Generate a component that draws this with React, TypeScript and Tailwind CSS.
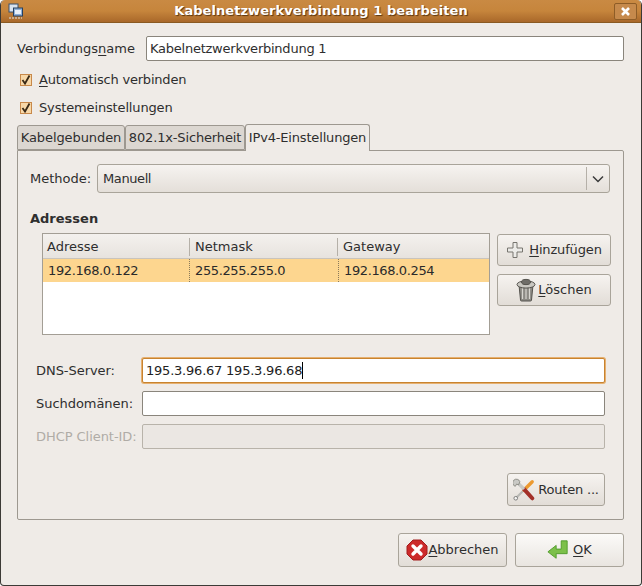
import React from "react";

const U = ({ children }: { children: React.ReactNode }) => <span className="underline underline-offset-2">{children}</span>;

function Btn({ className, icon, children }: { className: string; icon: React.ReactNode; children: React.ReactNode }) {
  return (
    <div className={`flex items-center justify-center rounded-[3px] border border-[#a9a49a] bg-gradient-to-b from-[#f6f3f0] to-[#e2ddd7] text-[#2e2e2e] ${className}`}>
      {icon}
      {children}
    </div>
  );
}

function Check({ children, mt, tracking }: { children: React.ReactNode; mt: string; tracking: string }) {
  return (
    <div className={`flex h-[20px] items-center pl-[3px] ${mt}`}>
      <div className="flex h-[12px] w-[12px] items-center justify-center border border-[#c8894a] bg-[#f8d8a8]">
        <svg width="12" height="12" viewBox="0 0 12 12" className="shrink-0"><path d="M2.5 6 L5 9.5 L9.5 1.5" fill="none" stroke="#3a2a16" strokeWidth="1.8" /></svg>
      </div>
      <span className={`ml-[7px] ${tracking}`}>{children}</span>
    </div>
  );
}

function Field({ label, mt, disabled, focus, value }: { label: string; mt: string; disabled?: boolean; focus?: boolean; value?: string }) {
  return (
    <div className={`flex items-center pl-[18px] pr-[18px] ${mt} ${disabled ? "text-[#b0aca6]" : ""}`}>
      <span className="w-[106px] shrink-0 whitespace-nowrap tracking-[-0.05px]">{label}</span>
      <div className={`flex h-[25px] flex-1 items-center rounded-[2px] border pl-[3px] ${focus ? "border-[#c8832f] shadow-[0_0_0_1px_#e6b070]" : disabled ? "border-[#b8b3aa] bg-[#ebe7e3]" : "border-[#8a857c]"} ${disabled ? "" : "bg-white"}`}>
        <span className="tracking-[-0.22px] text-[#222]">{value}</span>
        {focus && <span className="h-[17px] w-px bg-black" />}
      </div>
    </div>
  );
}

function Tab({ active, className, children }: { active?: boolean; className: string; children: React.ReactNode }) {
  return (
    <div className={`flex items-center justify-center whitespace-nowrap rounded-t-[3px] border border-[#9d9890] ${active ? "z-10 -mb-px h-[27px] border-b-0 bg-[#efebe7]" : "h-[25px] bg-[#dcd7d1]"} ${className}`}>
      {children}
    </div>
  );
}

function Plus() {
  return (
    <svg width="18" height="18" viewBox="0 0 18 18" className="mr-[2px]">
      <path d="M7 1.5h4v5.5h5.5v4H11v5.5H7V11H1.5V7H7z" fill="#ecebe8" stroke="#77756f" />
    </svg>
  );
}
function Trash() {
  return (
    <svg width="20" height="24" viewBox="0 0 20 24" className="mr-[1px]">
      <path d="M3 7h14l-1.5 15a1 1 0 0 1-1 1h-9a1 1 0 0 1-1-1z" fill="#8c8a84" stroke="#55534e" />
      <path d="M6.5 10v11M10 10v11M13.5 10v11" stroke="#d8d6d0" strokeWidth="1.2" />
      <ellipse cx="10" cy="6.5" rx="9" ry="3.6" fill="#c9c7c1" stroke="#55534e" />
      <ellipse cx="10" cy="4" rx="4.5" ry="2.6" fill="#6f6d68" stroke="#55534e" />
    </svg>
  );
}
function Tools() {
  return (
    <svg width="22" height="24" viewBox="0 0 24 24" className="mr-[3px]">
      <path d="M3 21 L12 12" stroke="#b8b8b4" strokeWidth="2.4" />
      <circle cx="3" cy="21" r="2" fill="#f4f4f2" stroke="#777" />
      <path d="M12 12 L21 3" stroke="#ec9a30" strokeWidth="3.6" strokeLinecap="round" />
      <path d="M12 11 L21 21" stroke="#a33028" strokeWidth="4.4" strokeLinecap="round" />
      <path d="M6 5 L12 11" stroke="#c8c8c4" strokeWidth="3.6" />
      <path d="M7.5 3 A4 4 0 1 0 2.5 8 L4 5.5 L6 6.5 z" fill="#c9c9c5" stroke="#77776f" strokeWidth="0.8" />
    </svg>
  );
}
function Cancel() {
  return (
    <svg width="22" height="22" viewBox="0 0 22 22" className="shrink-0">
      <path d="M7 1h8l6 6v8l-6 6H7l-6-6V7z" fill="#cc2a2a" stroke="#a21c1c" />
      <path d="M7 7l8 8M15 7l-8 8" stroke="#fff" strokeWidth="3.4" strokeLinecap="round" />
    </svg>
  );
}
function OkIcon() {
  return (
    <svg width="22" height="22" viewBox="0 0 24 22" className="mr-[4px] shrink-0">
      <path d="M15.5 1h6.5v14H10v5L1 13l9-7v4h5.5z" fill="#7cc04a" stroke="#4f9a2a" />
    </svg>
  );
}

export default function App() {
  return (
    <div className="relative flex h-[586px] w-[642px] flex-col overflow-hidden rounded-t-[5px] rounded-b-[4px] border-x border-b border-[#3c3a36] bg-[#efebe7] text-[13px] leading-[16px] text-[#2e2e2e] [font-family:'DejaVu_Sans',sans-serif]">
      {/* Title bar */}
      <div className="flex h-[23px] shrink-0 items-center justify-between border-b border-[#8a5a22] bg-gradient-to-b from-[#c98a43] via-[#c6853c] to-[#a9682a] pl-[7px] pr-[4px]">
        <div className="w-[20px]">
          <svg width="16" height="16" viewBox="0 0 16 16">
            <rect x="1" y="1" width="9" height="8" fill="#d8e2ee" stroke="#39506e" />
            <rect x="5.5" y="5" width="9" height="8" fill="#8fb0d8" stroke="#26405f" />
            <rect x="7" y="7" width="6" height="4" fill="#e9f0f8" />
            <path d="M1 15h13" stroke="#dfe5ea" strokeDasharray="2 1" />
          </svg>
        </div>
        <div className="font-bold tracking-[0.06px] text-white [text-shadow:1px_1px_1px_#5a3510]">Kabelnetzwerkverbindung 1 bearbeiten</div>
        <div className="flex h-[17px] w-[23px] items-center justify-center rounded-[2px] border border-[#8e5d27] bg-[#c68a4c]">
          <svg width="11" height="11" viewBox="0 0 11 11"><path d="M2 2l7 7M9 2l-7 7" stroke="#fff" strokeWidth="2.6" /></svg>
        </div>
      </div>

      <div className="flex flex-1 flex-col pl-[16px] pr-[17px]">
        <div className="mt-[13px] flex items-center">
          <span className="w-[129px] shrink-0 whitespace-nowrap pt-px">Verbindungs<U>n</U>ame</span>
          <div className="flex h-[25px] flex-1 items-center rounded-[2px] border border-[#8a857c] bg-white pl-[3px] pt-px tracking-[-0.24px]">Kabelnetzwerkverbindung 1</div>
        </div>
        <Check mt="mt-[9px]" tracking="tracking-[-0.2px]"><U>A</U>utomatisch verbinden</Check>
        <Check mt="mt-[8px]" tracking="tracking-[-0.15px]">Systemeinstellungen</Check>

        <div className="mt-[6px] flex h-[26px] items-start">
          <Tab className="mt-[1px] w-[108px] tracking-[-0.08px]">Kabelgebunden</Tab>
          <Tab className="mt-[1px] w-[120px] tracking-[-0.15px]">802.1x-Sicherheit</Tab>
          <Tab active className="w-[125px] tracking-[-0.17px]">IPv4-Einstellungen</Tab>
        </div>

        <div className="flex h-[370px] flex-col rounded-b-[2px] rounded-tr-[2px] border border-[#9d9890]">
          <div className="mt-[13px] flex items-center pl-[12px] pr-[13px]">
            <span className="w-[67px] shrink-0">Methode:</span>
            <div className="flex h-[29px] flex-1 items-center rounded-[3px] border border-[#a9a49a] bg-gradient-to-b from-[#f6f3f0] to-[#e4dfd9] pl-[5px]">
              <span className="flex-1 tracking-[-0.4px]">Manuell</span>
              <div className="h-[23px] w-px bg-[#b5b0a8]" />
              <svg width="22" height="12" viewBox="0 0 22 12"><path d="M6 3.5L11 8.5 16 3.5" fill="none" stroke="#3a3a3a" strokeWidth="1.5" /></svg>
            </div>
          </div>

          <div className="mt-[18px] pl-[12px] font-bold">Adressen</div>

          <div className="mt-[6px] flex pl-[24px] pr-[12px]">
            <div className="h-[102px] w-[448px] overflow-hidden border border-[#a39e95] bg-white">
              <div className="flex h-[25px] items-center border-b border-[#c9c4bc] bg-gradient-to-b from-[#f4f1ee] to-[#e7e3de] pt-px">
                <span className="w-[146px] pl-[4px]">Adresse</span>
                <span className="h-[18px] w-px bg-[#b5b0a8]" />
                <span className="w-[147px] pl-[5px]">Netmask</span>
                <span className="h-[18px] w-px bg-[#b5b0a8]" />
                <span className="pl-[5px]">Gateway</span>
              </div>
              <div className="flex h-[23px] items-center bg-[#fdd68f] tracking-[-0.38px] text-[#2a2a2a]">
                <span className="w-[146px] pl-[5px]">192.168.0.122</span>
                <span className="h-[23px] w-0 border-l border-dotted border-[#8a7a5a]" />
                <span className="w-[148px] pl-[5px]">255.255.255.0</span>
                <span className="h-[23px] w-0 border-l border-dotted border-[#8a7a5a]" />
                <span className="pl-[5px]">192.168.0.254</span>
              </div>
            </div>
            <div className="ml-[7px] flex w-[114px] flex-col">
              <Btn className="mt-px h-[32px]" icon={<Plus />}><span className="ml-[3px] tracking-[-0.15px]"><U>H</U>inzufügen</span></Btn>
              <Btn className="mt-[8px] h-[32px]" icon={<Trash />}><span className="ml-[1px]"><U>L</U>öschen</span></Btn>
            </div>
          </div>

          <Field label="DNS-Server:" mt="mt-[23px]" focus value="195.3.96.67 195.3.96.68" />
          <Field label="Suchdomänen:" mt="mt-[8px]" />
          <Field label="DHCP Client-ID:" mt="mt-[8px]" disabled />

          <div className="mt-[24px] flex justify-end pr-[18px]">
            <Btn className="h-[33px] w-[98px]" icon={<Tools />}><span className="tracking-[-0.2px]">Routen ...</span></Btn>
          </div>
        </div>

        <div className="mt-[13px] flex justify-end gap-[8px]">
          <Btn className="h-[34px] w-[109px]" icon={<Cancel />}><span><U>A</U>bbrechen</span></Btn>
          <Btn className="h-[34px] w-[109px] !from-[#fbfaf8] !to-[#e9e5e0]" icon={<OkIcon />}><span><U>O</U>K</span></Btn>
        </div>
      </div>
    </div>
  );
}
